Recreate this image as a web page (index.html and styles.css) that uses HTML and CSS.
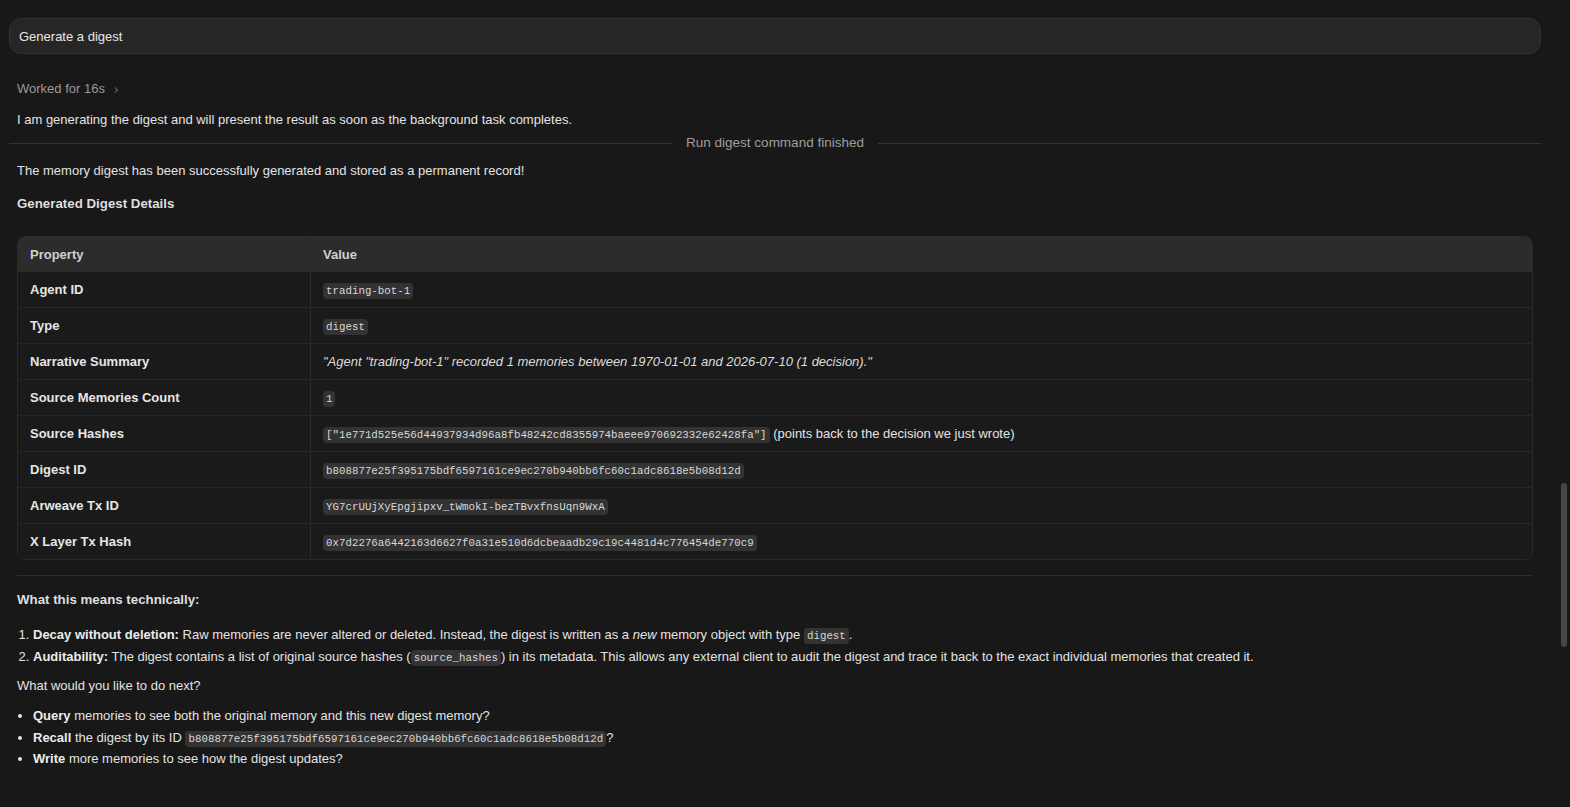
FILE: index.html
```html
<!DOCTYPE html>
<html lang="en">
<head>
  <meta charset="UTF-8" />
  <title>Generate a digest</title>
  <link rel="stylesheet" href="styles.css">
</head>
<body>

<div class="chat">
  <div class="prompt">Generate a digest</div>

  <div class="worked">Worked for 16s
    <svg class="chev" width="8" height="8" viewBox="0 0 8 8"><path d="M3 1.5 L5.5 4 L3 6.5" fill="none" stroke="#8a8a8a" stroke-width="1"/></svg>
  </div>

  <p class="msg first">I am generating the digest and will present the result as soon as the background task completes.</p>

  <div class="divider"><span>Run digest command finished</span></div>

  <p class="msg lead">The memory digest has been successfully generated and stored as a permanent record!</p>

  <h4 class="title">Generated Digest Details</h4>

  <div class="table-wrap">
    <table class="details">
      <thead>
        <tr><th class="col-prop">Property</th><th>Value</th></tr>
      </thead>
      <tbody>
        <tr><td class="key">Agent ID</td><td><code>trading-bot-1</code></td></tr>
        <tr><td class="key">Type</td><td><code>digest</code></td></tr>
        <tr><td class="key">Narrative Summary</td><td><em>"Agent "trading-bot-1" recorded 1 memories between 1970-01-01 and 2026-07-10 (1 decision)."</em></td></tr>
        <tr><td class="key">Source Memories Count</td><td><code>1</code></td></tr>
        <tr><td class="key">Source Hashes</td><td><code>["1e771d525e56d44937934d96a8fb48242cd8355974baeee970692332e62428fa"]</code> (points back to the decision we just wrote)</td></tr>
        <tr><td class="key">Digest ID</td><td><code>b808877e25f395175bdf6597161ce9ec270b940bb6fc60c1adc8618e5b08d12d</code></td></tr>
        <tr><td class="key">Arweave Tx ID</td><td><code>YG7crUUjXyEpgjipxv_tWmokI-bezTBvxfnsUqn9WxA</code></td></tr>
        <tr><td class="key">X Layer Tx Hash</td><td><code>0x7d2276a6442163d6627f0a31e510d6dcbeaadb29c19c4481d4c776454de770c9</code></td></tr>
      </tbody>
    </table>
  </div>

  <hr class="rule" />

  <h4 class="title tech">What this means technically:</h4>

  <ol class="points">
    <li><b>Decay without deletion:</b> Raw memories are never altered or deleted. Instead, the digest is written as a <em>new</em> memory object with type <code>digest</code>.</li>
    <li><b>Auditability:</b> The digest contains a list of original source hashes (<code>source_hashes</code>) in its metadata. This allows any external client to audit the digest and trace it back to the exact individual memories that created it.</li>
  </ol>

  <p class="msg next">What would you like to do next?</p>

  <ul class="options">
    <li><b>Query</b> memories to see both the original memory and this new digest memory?</li>
    <li><b>Recall</b> the digest by its ID <code>b808877e25f395175bdf6597161ce9ec270b940bb6fc60c1adc8618e5b08d12d</code>?</li>
    <li><b>Write</b> more memories to see how the digest updates?</li>
  </ul>
</div>

<div class="scroll-thumb"></div>

</body>
</html>
```

FILE: styles.css
```css
html, body {
  background: #181818;
}
body {
  margin: 0;
  font-family: 'Liberation Sans', Arial, sans-serif;
  font-size: 13px;
  color: #e3e3e3;
  overflow: hidden;
}
.chat {
  padding: 18px 29px 0 9px;
}
.prompt {
  height: 36px;
  box-sizing: border-box;
  display: flex;
  align-items: center;
  padding: 0 9px;
  background: #262626;
  border: 1px solid #323232;
  border-radius: 12px;
  color: #e6e6e6;
}
.worked {
  margin-top: 25px;
  padding-left: 8px;
  line-height: 20px;
  color: #9a9a9a;
}
.chev {
  margin-left: 3px;
  vertical-align: middle;
}
.msg {
  margin: 0;
  padding-left: 8px;
  line-height: 20px;
}
.first {
  margin-top: 11px;
}
.divider {
  margin-top: 3px;
  display: flex;
  align-items: center;
  line-height: 20px;
  color: #9e9e9e;
  font-size: 13.5px;
}
.divider::before,
.divider::after {
  content: "";
  flex: 1;
  height: 1px;
  background: #343434;
}
.divider span {
  padding: 0 14px;
}
.lead {
  margin-top: 8px;
}
.title {
  margin: 13px 0 0 0;
  padding-left: 8px;
  font-size: 13.3px;
  line-height: 20px;
  font-weight: bold;
  color: #dedede;
}
.table-wrap {
  margin: 22px 8px 0 8px;
  border: 1px solid #2a2a2a;
  border-radius: 8px;
  overflow: hidden;
}
.details {
  width: 100%;
  border-collapse: collapse;
}
.details th {
  height: 34px;
  text-align: left;
  font-weight: 600;
  color: #cfcfcf;
  background: #2c2c2c;
  padding: 0 12px;
  border-bottom: 1px solid #2a2a2a;
}
.details th + th,
.details td + td {
  border-left: 1px solid #2a2a2a;
}
.details .col-prop {
  width: 268px;
}
.details td {
  height: 35px;
  padding: 0 12px;
  border-bottom: 1px solid #262626;
  background: #1a1a1a;
}
.details tr:last-child td {
  border-bottom: none;
}
.details .key {
  font-weight: bold;
  color: #e6e6e6;
}
.details em {
  color: #dcdcdc;
}
code {
  font-family: 'Liberation Mono', 'DejaVu Sans Mono', monospace;
  font-size: 10.8px;
  line-height: 1;
  background: #333333;
  color: #d8d8d8;
  padding: 2px 3px;
  border-radius: 4px;
}
.rule {
  margin: 15px 8px 0 8px;
  border: none;
  border-top: 1px solid #2c2c2c;
}
.tech {
  margin-top: 14px;
}
.points {
  margin: 14px 0 0 0;
  padding-left: 24px;
  line-height: 22px;
}
.next {
  margin-top: 8px;
}
.options {
  margin: 9px 0 0 0;
  padding-left: 24px;
  line-height: 21.5px;
}
.options b,
.points b {
  color: #ececec;
}
.scroll-thumb {
  position: fixed;
  left: 1561px;
  top: 483px;
  width: 6px;
  height: 164px;
  border-radius: 3px;
  background: #474747;
}
```
